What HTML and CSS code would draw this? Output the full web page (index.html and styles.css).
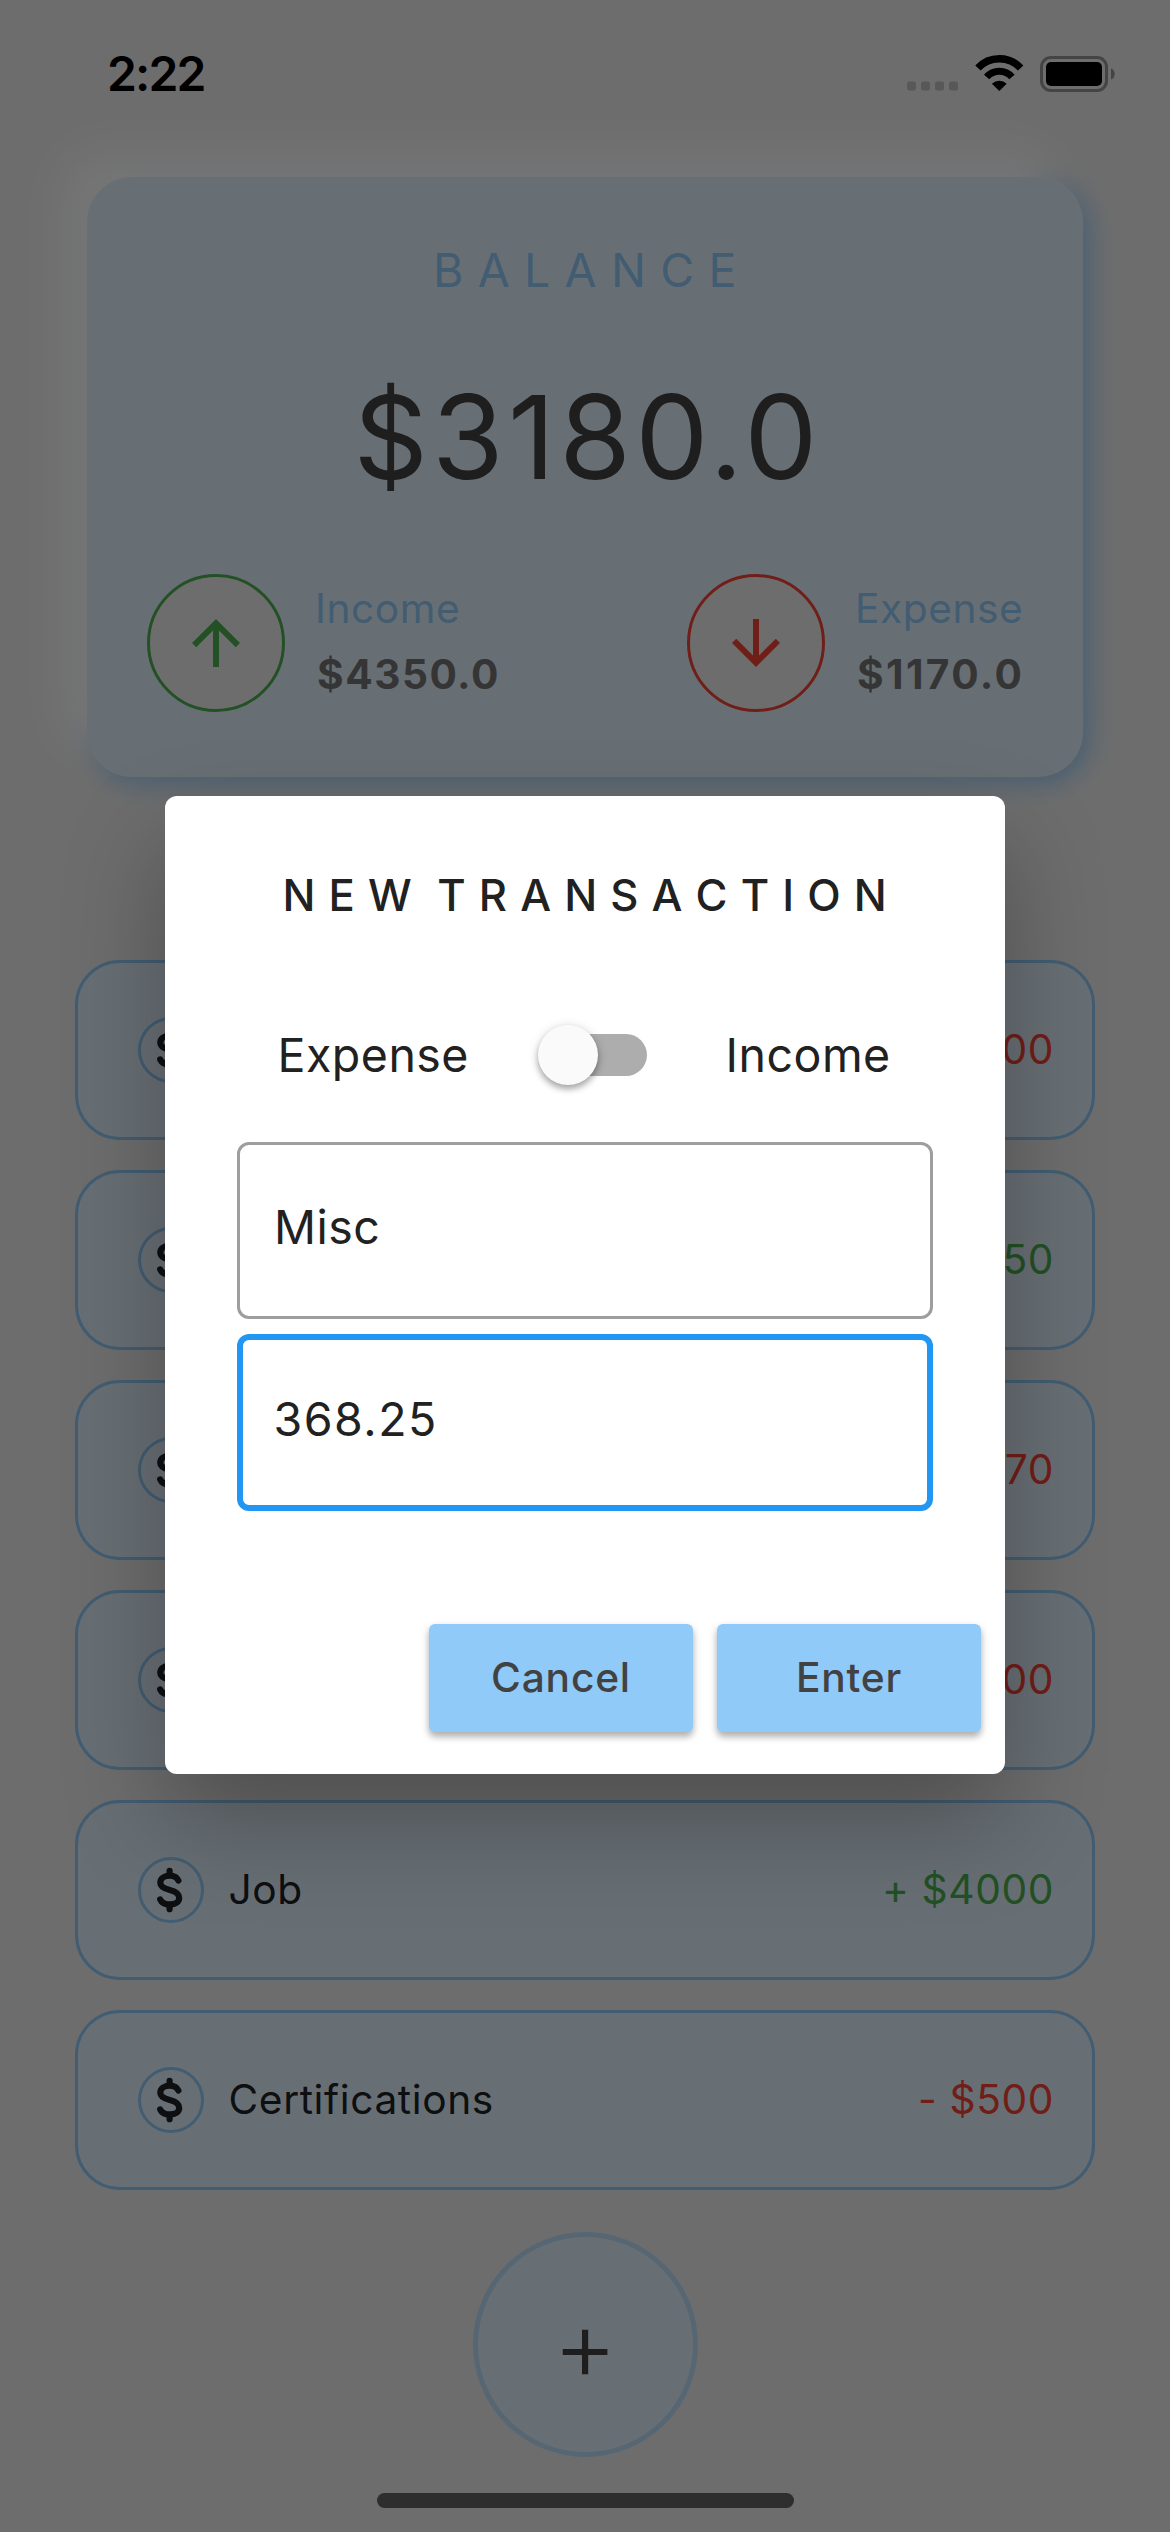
FILE: index.html
```html
<!DOCTYPE html>
<html lang="en">
<head>
<meta charset="utf-8">
<title>Balance</title>
<link rel="stylesheet" href="styles.css">
</head>
<body>
<svg class="defs" aria-hidden="true">
  <defs>
    <g id="dollar" fill="none" stroke="#1d2125" stroke-width="6.2" stroke-linecap="round">
      <path d="M40.4 23.6C39 20.4 36 18.7 31.8 18.7C26 18.7 22.3 21.8 22.3 25.8C22.3 30 26 31.6 31.8 33C38 34.5 41.2 36.6 41.2 41C41.2 45 37.5 47.4 32 47.4C27 47.4 23.6 45.6 22.2 42.4"/>
      <path d="M31.6 13.8V18M31.6 48V52.2"/>
    </g>
  </defs>
</svg>
<div class="app">
  <header class="status">
    <span class="time">2:22</span>
    <div class="status-icons">
      <svg class="signal" width="51" height="36" viewBox="0 0 51 36" fill="#585858">
        <rect x="0" y="26.5" width="9" height="9" rx="2.5"/><rect x="14" y="26.5" width="9" height="9" rx="2.5"/><rect x="28" y="26.5" width="9" height="9" rx="2.5"/><rect x="42" y="26.5" width="9" height="9" rx="2.5"/>
      </svg>
      <svg class="wifi" width="49" height="36" viewBox="0 0 49 36" fill="none" stroke="#000">
        <path stroke-width="7.4" d="M2.95 13A29.2 29.2 0 0 1 45.65 13"/>
        <path stroke-width="7" d="M11.65 22A16.7 16.7 0 0 1 36.95 22"/>
        <path fill="#000" stroke="none" d="M16.9 28.7A11 11 0 0 1 31.7 28.7L24.3 36Z"/>
      </svg>
      <svg class="battery" width="75" height="36" viewBox="0 0 75 36">
        <rect x="1.5" y="1.5" width="65" height="33" rx="9.5" fill="none" stroke="#444" stroke-width="3"/>
        <rect x="6" y="6" width="56" height="24" rx="5" fill="#000"/>
        <path d="M71 12.5C76 14 76 22 71 23.5Z" fill="#444"/>
      </svg>
    </div>
  </header>

  <section class="card">
    <h1 class="card-title">B A L A N C E</h1>
    <div class="total">$3180.0</div>
    <div class="summary">
      <div class="flow">
        <div class="flow-icon income"><svg width="72" height="72" viewBox="0 0 24 24" fill="currentColor"><path d="M4 12l1.41 1.41L11 7.83V20h2V7.83l5.58 5.59L20 12l-8-8-8 8z"/></svg></div>
        <div class="flow-text"><span class="label">Income</span><span class="sum">$4350.0</span></div>
      </div>
      <div class="flow">
        <div class="flow-icon expense"><svg width="72" height="72" viewBox="0 0 24 24" fill="currentColor"><path d="M20 12l-1.41-1.41L13 16.17V4h-2v12.17l-5.58-5.59L4 12l8 8 8-8z"/></svg></div>
        <div class="flow-text"><span class="label">Expense</span><span class="sum tight">$1170.0</span></div>
      </div>
    </div>
  </section>

  <ul class="list">
    <li class="item"><svg class="coin" viewBox="3 3 60 60"><use href="#dollar"/></svg><span class="name"></span><span class="amount out">- $400</span></li>
    <li class="item"><svg class="coin" viewBox="3 3 60 60"><use href="#dollar"/></svg><span class="name"></span><span class="amount in">+ $350</span></li>
    <li class="item"><svg class="coin" viewBox="3 3 60 60"><use href="#dollar"/></svg><span class="name"></span><span class="amount out">- $70</span></li>
    <li class="item"><svg class="coin" viewBox="3 3 60 60"><use href="#dollar"/></svg><span class="name"></span><span class="amount out">- $200</span></li>
    <li class="item"><svg class="coin" viewBox="3 3 60 60"><use href="#dollar"/></svg><span class="name">Job</span><span class="amount in">+ $4000</span></li>
    <li class="item"><svg class="coin" viewBox="3 3 60 60"><use href="#dollar"/></svg><span class="name">Certifications</span><span class="amount out">- $500</span></li>
  </ul>

  <button class="fab">+</button>
  <div class="home-bar"></div>
</div>

<div class="scrim">
  <div class="dialog">
    <h2 class="dialog-title">N E W  T R A N S A C T I O N</h2>
    <div class="kind">
      <span class="kind-expense">Expense</span>
      <span class="switch"><span class="thumb"></span></span>
      <span>Income</span>
    </div>
    <div class="field">Misc</div>
    <div class="field focused">368.25</div>
    <div class="actions">
      <button class="btn">Cancel</button>
      <button class="btn">Enter</button>
    </div>
  </div>
</div>
</body>
</html>
```
FILE: styles.css
```css
* { box-sizing: border-box; }

body {
  margin: 0;
  position: relative;
  width: 1170px;
  height: 2532px;
  overflow: hidden;
  background: #eee;
  font-family: Inter, "Liberation Sans", sans-serif;
}

.defs { position: absolute; width: 0; height: 0; }

.app {
  display: flex;
  flex-direction: column;
  align-items: center;
  height: 2532px;
}

/* Status bar sits above the scrim */
.status {
  position: relative;
  z-index: 3;
  align-self: stretch;
  height: 147px;
  margin-bottom: 30px;
  padding: 0 55px 0 107px;
  display: flex;
  align-items: center;
  justify-content: space-between;
}
.time {
  font-size: 48px;
  font-weight: 600;
  line-height: 60px;
  letter-spacing: -1.87px;
}
.status-icons { display: flex; align-items: center; }
.wifi { margin: 0 16px 2px 17px; }
.signal { margin-bottom: 1px; }

/* Balance card */
.card {
  width: 996px;
  height: 600px;
  padding: 63px 60px 0;
  border-radius: 45px;
  background: #e3f2fd;
  box-shadow: -26px -26px 42px #fff, 5px 5px 27px #90caf9;
}
.card-title {
  margin: 0;
  font-size: 46.5px;
  font-weight: 400;
  line-height: 60px;
  letter-spacing: .6px;
  text-align: center;
  color: #90caf9;
}
.total {
  margin-top: 67px;
  padding-left: 5px;
  font-size: 116px;
  line-height: 140px;
  letter-spacing: 4.15px;
  text-align: center;
  color: #424242;
}
.summary {
  margin-top: 67px;
  display: grid;
  grid-template-columns: 540px auto;
}
.flow { display: flex; }
.flow-icon {
  width: 138px;
  height: 138px;
  display: grid;
  place-items: center;
  border: 3px solid;
  border-radius: 50%;
  background: #eee;
}
.income { color: #4caf50; }
.expense { color: #f44336; }
.flow-text {
  display: flex;
  flex-direction: column;
  padding: 2px 0 0 30px;
  font-size: 40.7px;
  line-height: 66px;
}
.label { color: #90caf9; letter-spacing: .54px; }
.sum {
  padding-left: 2px;
  font-weight: 700;
  color: #757575;
  letter-spacing: 1.49px;
}
.sum.tight { letter-spacing: 2.35px; }

/* Transactions */
.list {
  margin: 183px 0 0;
  padding: 0;
  width: 1020px;
  list-style: none;
  display: flex;
  flex-direction: column;
  gap: 30px;
}
.item {
  height: 180px;
  padding: 0 38px 0 60px;
  display: flex;
  align-items: center;
  border: 3px solid #90caf9;
  border-radius: 45px;
  background: #e3f2fd;
  font-size: 40.7px;
  line-height: 60px;
  letter-spacing: .6px;
}
.coin {
  flex: none;
  width: 66px;
  height: 66px;
  border: 3px solid #90caf9;
  border-radius: 50%;
}
.name {
  flex: 1;
  padding-left: 24.5px;
  color: #1d2125;
}
.in { color: #4caf50; }
.out { color: #f44336; }

.fab {
  width: 225px;
  height: 225px;
  margin: 42px 0 36px;
  padding: 0;
  border: 5px solid #bbdefb;
  border-radius: 50%;
  background: #e3f2fd;
  color: #424242;
  font: 350 99px/215px Inter, "Liberation Sans", sans-serif;
}
.home-bar {
  position: relative;
  z-index: 3;
  width: 417px;
  height: 15px;
  border-radius: 8px;
  background: #2e2e2e;
}

/* Dialog */
.scrim {
  position: absolute;
  inset: 0;
  z-index: 2;
  padding-top: 38px;
  display: flex;
  align-items: center;
  justify-content: center;
  background: rgba(0, 0, 0, .54);
}
.dialog {
  width: 840px;
  height: 977.5px;
  padding: 74px 24px 0 72px;
  border-radius: 12px;
  background: #fff;
  color: #212121;
  box-shadow: 0 48px 100px rgba(0, 0, 0, .28);
}
.dialog-title {
  margin: 0 48px 0 0;
  font-size: 43.6px;
  font-weight: 500;
  line-height: 52px;
  letter-spacing: .75px;
  text-align: center;
  white-space: pre;
}
.kind {
  margin: 102.5px 0 57px 40.6px;
  display: flex;
  align-items: center;
  font-size: 46.5px;
  line-height: 60px;
  letter-spacing: .47px;
}
.kind-expense { width: 191px; }
.switch {
  display: flex;
  align-items: center;
  width: 99px;
  height: 42px;
  margin: 0 79px;
  border-radius: 21px;
  background: #adadad;
}
.thumb {
  flex: none;
  width: 60px;
  height: 60px;
  margin-left: -10px;
  border-radius: 50%;
  background: #fafafa;
  box-shadow: 0 4px 6px rgba(0, 0, 0, .3), 0 1px 12px rgba(0, 0, 0, .12);
}
.field {
  width: 696px;
  height: 177px;
  padding: 0 34px 7px;
  display: flex;
  align-items: center;
  border: 3px solid #9e9e9e;
  border-radius: 12px;
  font-size: 46.5px;
  letter-spacing: .5px;
}
.field.focused {
  margin-top: 15px;
  padding: 0 30.5px 7px;
  border: 6px solid #2196f3;
  letter-spacing: 1.49px;
}
.actions {
  margin-top: 113px;
  display: flex;
  justify-content: flex-end;
  gap: 24px;
}
.btn {
  width: 264px;
  height: 108px;
  padding: 0;
  border: 0;
  border-radius: 6px;
  background: #90caf9;
  color: #424242;
  font: 500 40.7px/60px Inter, "Liberation Sans", sans-serif;
  letter-spacing: .8px;
  box-shadow: 0 5px 7px rgba(0, 0, 0, .26), 0 2px 8px rgba(0, 0, 0, .1);
}
```
